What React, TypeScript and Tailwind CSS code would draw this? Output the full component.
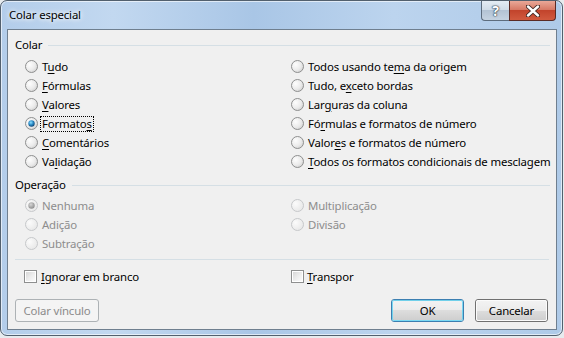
import type { ReactNode } from "react";

type Item = { label: ReactNode; checked?: boolean; disabled?: boolean; focus?: boolean };

const u = (s: string) => <span className="underline underline-offset-[2px]">{s}</span>;

const pasteLeft: Item[] = [
  { label: <>T{u("u")}do</> },
  { label: <>{u("F")}órmulas</> },
  { label: <>{u("V")}alores</> },
  { label: <>Formato{u("s")}</>, checked: true, focus: true },
  { label: <>{u("C")}omentários</> },
  { label: <>Va{u("l")}idação</> },
];

const pasteRight: Item[] = [
  { label: <>Todos usando te{u("m")}a da origem</> },
  { label: <>Tudo, e{u("x")}ceto bordas</> },
  { label: <>Lar{u("g")}uras da coluna</> },
  { label: <>Fó{u("r")}mulas e formatos de número</> },
  { label: <>Valor{u("e")}s e formatos de número</> },
  { label: <>{u("T")}odos os formatos condicionais de mesclagem</> },
];

function Radio({ checked, disabled }: { checked?: boolean; disabled?: boolean }) {
  return (
    <svg width="13" height="13" viewBox="0 0 13 13" className="shrink-0">
      <circle
        cx="6.5"
        cy="6.5"
        r="6"
        fill={disabled ? "url(#rfillOff)" : "url(#rfill)"}
        stroke={disabled ? "#c6c8ca" : "#8e8f8f"}
      />
      {checked ? (
        <circle cx="6.5" cy="6.5" r="3.2" fill={disabled ? "url(#rdotOff)" : "url(#rdot)"} />
      ) : null}
    </svg>
  );
}

function Check() {
  return (
    <span className="flex h-[13px] w-[13px] shrink-0 border border-[#8e8f8f] bg-white p-[1px]">
      <span className="h-full w-full bg-gradient-to-br from-[#d7d7d7] via-[#ececec] to-[#fbfbfb]" />
    </span>
  );
}

function RadioRow({ item }: { item: Item }) {
  return (
    <div className="flex h-[19px] items-center whitespace-nowrap">
      <Radio checked={item.checked} disabled={item.disabled} />
      <span
        className={`ml-[3px] px-[1px] leading-[14px] ${
          item.focus ? "outline outline-1 outline-dotted outline-black" : ""
        } ${item.disabled ? "text-[#8d8d8d]" : "text-black"}`}
      >
        {item.label}
      </span>
    </div>
  );
}

function Heading({ children }: { children: ReactNode }) {
  return (
    <div className="flex h-[14px] items-center pl-[7px] pr-[6px]">
      <span className="leading-[14px] text-black">{children}</span>
      <span className="ml-[6px] h-px flex-1 bg-[#d5dfe5]" />
    </div>
  );
}

function Button({ children, primary, disabled, width }: { children: ReactNode; primary?: boolean; disabled?: boolean; width: string }) {
  if (disabled) {
    return (
      <div className={`flex h-[23px] ${width} items-center justify-center rounded-[3px] border border-[#adb2b5] bg-[#f4f4f4] text-[#8b8b8b]`}>
        {children}
      </div>
    );
  }
  return (
    <div
      className={`flex h-[23px] ${width} rounded-[3px] border ${
        primary ? "border-[#3c7fb1]" : "border-[#707070]"
      }`}
    >
      <div
        className={`flex flex-1 items-center justify-center rounded-[2px] border ${
          primary ? "border-[#48d0f5]/70" : "border-[#fbfbfb]"
        } bg-[linear-gradient(#f2f2f2_0%,#ebebeb_50%,#dddddd_50%,#cfcfcf_100%)] text-black`}
      >
        {children}
      </div>
    </div>
  );
}

export default function App() {
  return (
    <div className="h-[338px] w-[564px] bg-[#e7ebee] font-['Noto_Sans',sans-serif] text-[11.4px] tracking-[-0.16px]">
      <svg width="0" height="0" className="absolute">
        <defs>
          <radialGradient id="rfill" cx="0.35" cy="0.35" r="0.75">
            <stop offset="0" stopColor="#fdfdfd" />
            <stop offset="0.6" stopColor="#ebebeb" />
            <stop offset="1" stopColor="#cfcfcf" />
          </radialGradient>
          <radialGradient id="rfillOff" cx="0.35" cy="0.35" r="0.75">
            <stop offset="0" stopColor="#fbfbfb" />
            <stop offset="1" stopColor="#e6e6e6" />
          </radialGradient>
          <radialGradient id="rdot" cx="0.4" cy="0.35" r="0.7">
            <stop offset="0" stopColor="#8fe0ff" />
            <stop offset="0.5" stopColor="#2b8cc8" />
            <stop offset="1" stopColor="#0d3d6a" />
          </radialGradient>
          <radialGradient id="rdotOff" cx="0.4" cy="0.35" r="0.7">
            <stop offset="0" stopColor="#d6d6d6" />
            <stop offset="1" stopColor="#8a8a8a" />
          </radialGradient>
        </defs>
      </svg>

      <div className="flex h-[336px] w-[563px] flex-col rounded-[7px] border border-[#52606e] bg-[linear-gradient(90deg,#b3cdea_0%,#c2d8f0_20%,#a9c6e6_45%,#bcd4ee_70%,#aecae8_100%)] shadow-[inset_0_0_0_1px_rgba(255,255,255,0.6)]">
        {/* title bar */}
        <div className="flex h-[28px] items-start pl-[8px] pr-[6px]">
          <span className="mt-[6px] leading-[16px] text-black [text-shadow:0_0_6px_#ffffff,0_0_4px_#ffffff]">Colar especial</span>
          <div className="ml-auto flex">
            <div className="flex h-[20px] w-[28px] items-center justify-center rounded-bl-[4px] border border-t-0 border-r-0 border-[#5d6d7e] bg-[linear-gradient(#e4ecf4_0%,#cfdbe7_50%,#b3c3d4_50%,#c5d3e1_100%)]">
              <span className="text-[14px] font-bold leading-none text-white [text-shadow:0_0_1px_#2d3b4a,0_0_1px_#2d3b4a,0_0_2px_#2d3b4a]">?</span>
            </div>
            <div className="flex h-[20px] w-[47px] items-center justify-center rounded-br-[4px] border border-t-0 border-[#5a2b25] bg-[linear-gradient(#e9a898_0%,#d77a66_45%,#c2442c_50%,#d15a3f_100%)]">
              <svg width="14" height="12" viewBox="0 0 14 12">
                <path d="M2 1.5 L12 10.5 M12 1.5 L2 10.5" stroke="#3b2420" strokeWidth="4.2" strokeLinecap="round" />
                <path d="M2 1.5 L12 10.5 M12 1.5 L2 10.5" stroke="#ffffff" strokeWidth="2.4" strokeLinecap="round" />
              </svg>
            </div>
          </div>
        </div>

        {/* client area */}
        <div className="ml-[6px] mr-[5px] flex h-[301px] flex-col border border-[#6f7f8f] bg-[#f0f0f0]">
          <div className="mt-[8px]">
            <Heading>Colar</Heading>
          </div>
          <div className="mt-[5px] flex pl-[17px]">
            <div className="w-[266px]">
              {pasteLeft.map((item, i) => (
                <RadioRow key={i} item={item} />
              ))}
            </div>
            <div>
              {pasteRight.map((item, i) => (
                <RadioRow key={i} item={item} />
              ))}
            </div>
          </div>

          <div className="mt-[7px]">
            <Heading>Operação</Heading>
          </div>
          <div className="mt-[4px] flex pl-[17px]">
            <div className="w-[266px]">
              <RadioRow item={{ label: "Nenhuma", checked: true, disabled: true }} />
              <RadioRow item={{ label: "Adição", disabled: true }} />
              <RadioRow item={{ label: "Subtração", disabled: true }} />
            </div>
            <div>
              <RadioRow item={{ label: "Multiplicação", disabled: true }} />
              <RadioRow item={{ label: "Divisão", disabled: true }} />
            </div>
          </div>

          <div className="mx-[7px] mt-[6px] h-px bg-[#d5dfe5]" />

          <div className="mt-[7px] flex h-[19px] items-center whitespace-nowrap pl-[16px]">
            <div className="flex w-[267px] items-center">
              <Check />
              <span className="ml-[4px] leading-[14px]">{u("I")}gnorar em branco</span>
            </div>
            <div className="flex items-center">
              <Check />
              <span className="ml-[3px] leading-[14px]">{u("T")}ranspor</span>
            </div>
          </div>

          <div className="mt-[13px] flex pl-[7px] pr-[8px]">
            <Button disabled width="w-[84px]">Colar vínculo</Button>
            <div className="ml-auto flex gap-[11px]">
              <Button primary width="w-[73px]">OK</Button>
              <Button width="w-[73px]">Cancelar</Button>
            </div>
          </div>
        </div>
      </div>
    </div>
  );
}
